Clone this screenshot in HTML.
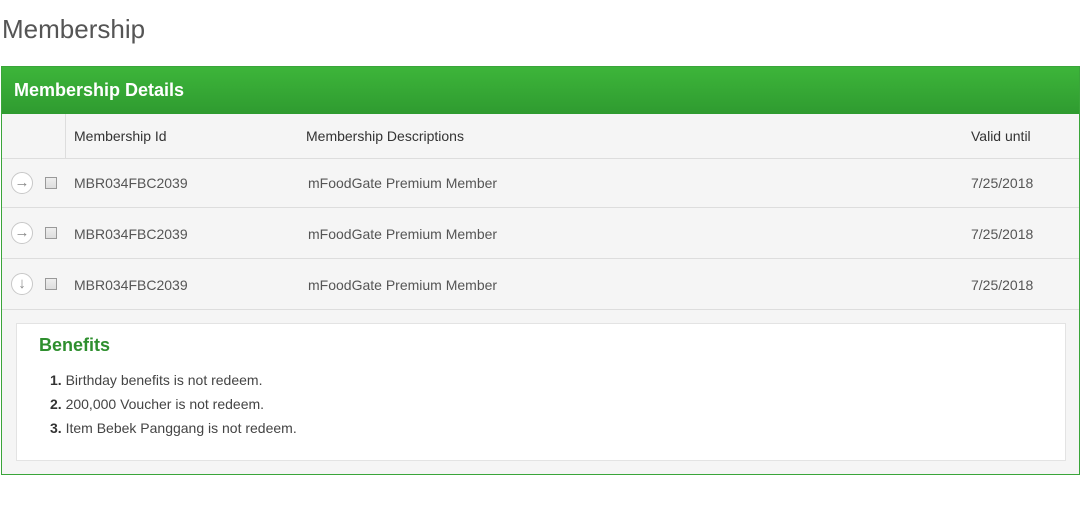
<!DOCTYPE html>
<html><head><style>
*{margin:0;padding:0;box-sizing:border-box}
body{width:1080px;height:506px;background:#fff;font-family:"Liberation Sans",sans-serif;position:relative;overflow:hidden}
.a{position:absolute}
h1{position:absolute;left:2px;top:14px;font-weight:300;font-size:26px;color:#555;letter-spacing:0px}
.panel{left:1px;top:66px;width:1079px;height:409px;border:1px solid #3aa53a;background:#f5f5f5}
.hd{left:0;top:0;width:1077px;height:47px;background:linear-gradient(#3db53a,#2f9b30);color:#fff;font-weight:bold;font-size:18px;padding:13px 0 0 12px}
.t{font-size:14px;color:#555}
.row{left:0;width:1077px;border-bottom:1px solid #ddd}
.c{position:absolute;width:22px;height:22px;border:1px solid #c8c8c8;border-radius:50%;background:#fff;color:#888;font-size:15px;text-align:center;line-height:19px;left:9px}
.cb{position:absolute;width:12px;height:12px;border:1px solid #999;background:linear-gradient(#eee,#ddd);left:43px}
</style></head><body>
<h1>Membership</h1>
<div class="a panel">
<div class="a hd">Membership Details</div>
<div class="a row" style="top:47px;height:45px">
<div class="a" style="left:63px;top:0;height:44px;border-left:1px solid #ddd"></div>
<div class="a t" style="left:72px;top:14px;color:#333">Membership Id</div>
<div class="a t" style="left:304px;top:14px;color:#333">Membership Descriptions</div>
<div class="a t" style="left:969px;top:14px;color:#333">Valid until</div>
</div>
<div class="a row" style="top:92px;height:49px">
<div class="c" style="top:13px">→</div><div class="cb" style="top:18px"></div>
<div class="a t" style="left:72px;top:16px">MBR034FBC2039</div>
<div class="a t" style="left:306px;top:16px">mFoodGate Premium Member</div>
<div class="a t" style="left:969px;top:16px">7/25/2018</div>
</div>
<div class="a row" style="top:141px;height:51px">
<div class="c" style="top:14px">→</div><div class="cb" style="top:19px"></div>
<div class="a t" style="left:72px;top:18px">MBR034FBC2039</div>
<div class="a t" style="left:306px;top:18px">mFoodGate Premium Member</div>
<div class="a t" style="left:969px;top:18px">7/25/2018</div>
</div>
<div class="a row" style="top:192px;height:51px">
<div class="c" style="top:14px">↓</div><div class="cb" style="top:19px"></div>
<div class="a t" style="left:72px;top:18px">MBR034FBC2039</div>
<div class="a t" style="left:306px;top:18px">mFoodGate Premium Member</div>
<div class="a t" style="left:969px;top:18px">7/25/2018</div>
</div>
<div class="a" style="left:14px;top:256px;width:1050px;height:138px;background:#fff;border:1px solid #e3e3e3">
<div class="a" style="left:22px;top:11px;font-size:18px;font-weight:bold;color:#2e8f2e">Benefits</div>
<div class="a t" style="left:33px;top:44px;line-height:24px;color:#444"><b style="color:#333">1.</b> Birthday benefits is not redeem.<br><b style="color:#333">2.</b> 200,000 Voucher is not redeem.<br><b style="color:#333">3.</b> Item Bebek Panggang is not redeem.</div>
</div>
</div>
</body></html>
